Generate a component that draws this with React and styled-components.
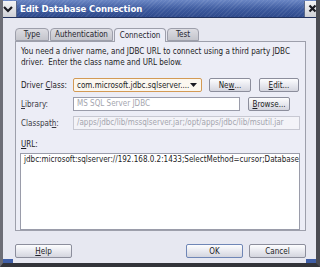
import React from 'react'
import styled, { createGlobalStyle } from 'styled-components'

const Global = createGlobalStyle`
	html, body {
		margin: 0;
		padding: 0;
		background: #e7e8f1;
	}
	body {
		font-family: "DejaVu Sans Condensed", "DejaVu Sans", sans-serif;
		font-size: 8px;
		color: #1c1c24;
	}
`

const Frame = styled.div`
	position: relative;
	box-sizing: border-box;
	width: 320px;
	height: 267px;
	background: #e7e8f1;
	border-left: 3px solid #6c6d76;
	border-right: 4px solid #4a4b52;
	border-bottom: 4px solid #33343a;
	display: flex;
	flex-direction: column;
	overflow: hidden;
`

const Corner = styled.div`
	position: absolute;
	bottom: 0;
	${p => (p.$side === 'left' ? 'left: 0;' : 'right: 0;')}
	width: 10px;
	height: 4px;
	background: #3f5ea6;
`

const TitleBar = styled.div`
	display: flex;
	align-items: center;
	height: 17px;
	margin-left: -3px;
	margin-right: -4px;
	background:
		repeating-linear-gradient(135deg, rgba(255, 255, 255, .07) 0 1px, transparent 1px 3px),
		linear-gradient(#6a86c4, #3d5a9e 55%, #2f4a8c);
	border-bottom: 1px solid #22325e;
`

const MenuBox = styled.div`
	width: 16px;
	height: 16px;
	display: grid;
	place-items: center;
	background: linear-gradient(#f4f4f6, #cfd0d6);
	border-right: 1px solid #5a6888;
`

const Title = styled.div`
	flex: 1;
	padding-left: 3px;
	font-family: "DejaVu Sans Condensed", "DejaVu Sans", sans-serif;
	font-weight: bold;
	font-size: 9.5px;
	color: #fff;
	letter-spacing: -0.1px;
`

const CloseBox = styled.div`
	width: 15px;
	height: 16px;
	display: grid;
	place-items: center;
	background: linear-gradient(#f4f4f6, #cfd0d6);
	border-left: 1px solid #5a6888;
`

const Body = styled.div`
	flex: 1;
	display: flex;
	flex-direction: column;
	padding: 10px 11px 0 12px;
`

const Tabs = styled.div`
	display: flex;
	height: 13px;
	align-items: flex-end;
`

const Tab = styled.div`
	box-sizing: border-box;
	width: ${p => p.$w}px;
	height: ${p => (p.$active ? 14 : 13)}px;
	margin-bottom: ${p => (p.$active ? -1 : 0)}px;
	margin-right: 1px;
	display: flex;
	align-items: center;
	justify-content: center;
	font-size: 8px;
	color: #26262e;
	border: 1px solid #9d9fab;
	border-bottom: ${p => (p.$active ? 'none' : '1px solid #9d9fab')};
	border-radius: 4px 4px 0 0;
	background: ${p => (p.$active ? '#ecedf6' : 'linear-gradient(#dcdce2, #c4c5cc)')};
	position: relative;
	z-index: ${p => (p.$active ? 2 : 1)};
`

const Panel = styled.div`
	box-sizing: border-box;
	width: 291px;
	height: 190px;
	background: #ecedf6;
	border: 1px solid #9d9fab;
	padding: 4px 5px 0 4px;
	display: flex;
	flex-direction: column;
`

const Intro = styled.p`
	margin: 0 0 0 1px;
	line-height: 11px;
	font-size: 8px;
	white-space: pre;
`

const Form = styled.div`
	margin-top: 10px;
	display: grid;
	grid-template-columns: 53px 1fr;
	row-gap: 5px;
	align-items: center;
`

const Label = styled.div`
	font-size: 8px;
	color: ${p => (p.$dim ? '#3a3a44' : '#1c1c24')};
	padding-left: 1px;
`

const Line = styled.div`
	display: flex;
	align-items: center;
	gap: ${p => p.$gap || 7}px;
`

const Field = styled.div`
	box-sizing: border-box;
	height: 14px;
	width: ${p => (p.$w ? `${p.$w}px` : '100%')};
	flex: ${p => (p.$w ? 'none' : 1)};
	border: 1px solid ${p => (p.$disabled ? '#c7c8d2' : '#9a9caa')};
	background: ${p => (p.$disabled ? '#f3f3f8' : '#fff')};
	color: ${p => (p.$muted ? '#a4a5ae' : '#1c1c24')};
	padding: 0 3px;
	font-size: 8px;
	line-height: 12px;
	white-space: nowrap;
	overflow: hidden;
`

const Combo = styled.div`
	box-sizing: border-box;
	width: 129px;
	height: 14px;
	display: flex;
	align-items: center;
	justify-content: space-between;
	padding: 0 4px 0 3px;
	border: 1px solid #d39a55;
	border-radius: 2px;
	background: #fbf7ef;
	font-size: 8px;
	white-space: nowrap;
`

const Button = styled.div`
	box-sizing: border-box;
	width: ${p => p.$w}px;
	height: 14px;
	margin-left: ${p => p.$ml || 0}px;
	display: flex;
	align-items: center;
	justify-content: center;
	white-space: pre;
	border: 1px solid ${p => (p.$default ? '#6f86b6' : '#8c8e9c')};
	border-radius: 2px;
	background: linear-gradient(#fdfdfe, #e4e5ec 60%, #d4d5de);
	font-size: 8px;
	color: #1c1c24;
`

const UrlLabel = styled.div`
	margin: 10px 0 4px 1px;
	font-size: 8px;
`

const Footer = styled.div`
	display: flex;
	align-items: center;
	margin-top: 13px;
	width: 291px;
`

const Spacer = styled.div`
	flex: 1;
`

const U = styled.span`
	text-decoration: underline;
`

const Chevron = () => (
	<svg width="10" height="8" viewBox="0 0 10 8">
		<path d="M1 2 L5 6 L9 2" stroke="#1a1a22" strokeWidth="2.2" fill="none" />
	</svg>
)

const Cross = () => (
	<svg width="9" height="9" viewBox="0 0 9 9">
		<path d="M1.5 1.5 L7.5 7.5 M7.5 1.5 L1.5 7.5" stroke="#1a1a22" strokeWidth="2.2" />
	</svg>
)

const Arrow = () => (
	<svg width="7" height="4" viewBox="0 0 7 4">
		<path d="M0 0 H7 L3.5 4 Z" fill="#1a1a22" />
	</svg>
)

const App = () => {
	return (
		<>
			<Global />
			<Frame>
				<TitleBar>
					<MenuBox><Chevron /></MenuBox>
					<Title>Edit Database Connection</Title>
					<CloseBox><Cross /></CloseBox>
				</TitleBar>
				<Body>
					<Tabs>
						<Tab $w={34}>Type</Tab>
						<Tab $w={63}>Authentication</Tab>
						<Tab $w={52} $active>Connection</Tab>
						<Tab $w={32}>Test</Tab>
					</Tabs>
					<Panel>
						<Intro>{'You need a driver name, and JDBC URL to connect using a third party JDBC\ndriver.  Enter the class name and URL below.'}</Intro>
						<Form>
							<Label>Driver <U>C</U>lass:</Label>
							<Line>
								<Combo>
									<span>com.microsoft.jdbc.sqlserver....</span>
									<Arrow />
								</Combo>
								<Button $w={42}>Ne<U>w</U>...</Button>
								<Button $w={40} $ml={1}><U>E</U>dit...</Button>
							</Line>
							<Label $dim><U>L</U>ibrary:</Label>
							<Line $gap={8}>
								<Field $w={167} $muted>MS SQL Server JDBC</Field>
								<Button $w={42}><U>B</U>rowse...</Button>
							</Line>
							<Label $dim>Classpat<U>h</U>:</Label>
							<Field $disabled $muted>/apps/jdbc/lib/mssqlserver.jar;/opt/apps/jdbc/lib/msutil.jar</Field>
						</Form>
						<UrlLabel><U>U</U>RL:</UrlLabel>
						<Field>jdbc:microsoft:sqlserver://192.168.0.2:1433;SelectMethod=cursor;Database</Field>
					</Panel>
					<Footer>
						<Button $w={57}><U>H</U>elp</Button>
						<Spacer />
						<Button $w={57} $default>OK</Button>
						<Button $w={57} $ml={6}>Cancel</Button>
					</Footer>
				</Body>
				<Corner $side="left" />
				<Corner $side="right" />
			</Frame>
		</>
	)
}

export default App
